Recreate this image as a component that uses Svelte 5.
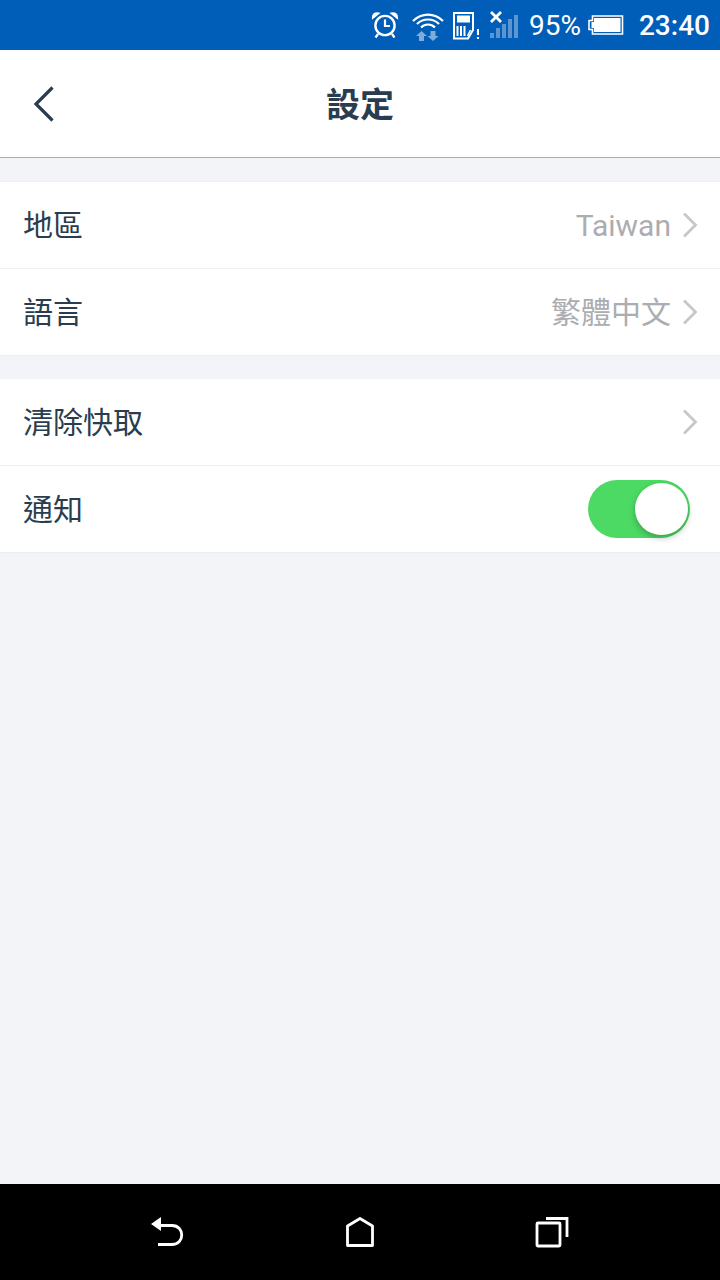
<script lang="ts">
	const groups = [
		[
			{ label: '地區', value: 'Taiwan', arrow: true },
			{ label: '語言', value: '繁體中文', cjk: true, arrow: true }
		],
		[
			{ label: '清除快取', arrow: true },
			{ label: '通知', toggle: true }
		]
	];
</script>

<div class="screen">
	<div class="status-bar">
		<svg class="ic-alarm" width="30" height="30" viewBox="0 0 30 30" fill="none" stroke="#fff">
			<circle cx="15" cy="15.500" r="9.600" stroke-width="2.400" />
			<path d="M15 9.500v6.500h5" stroke-width="2.200" />
			<path d="M2.500 8.500C2 4.500 5 2 9 3.200L2.500 8.500zM27.500 8.500C28 4.500 25 2 21 3.200l6.500 5.300z" fill="#fff" stroke-width="1.400" />
			<path d="M8 24l-2.500 3.500M22 24l2.500 3.500" stroke-width="2.200" />
		</svg>
		<svg class="ic-wifi" width="32" height="30" viewBox="0 0 32 30" fill="none">
			<g stroke="#fff" stroke-width="2.200">
				<path d="M1 10C9.500 1.500 22.500 1.500 31 10" />
				<path d="M5 13C11 7 21 7 27 13" />
				<path d="M9 16.500C13 12.500 19 12.500 23 16.500" />
			</g>
			<path d="M9.500 20l5.500 5h-3v5H7v-5H4z" fill="#7fadda" />
			<path d="M21 30l-5.500-5h3v-5h5v5h3z" fill="#7fadda" />
		</svg>
		<svg class="ic-sim" width="27" height="28" viewBox="0 0 27 28" fill="none">
			<path d="M1 1h19v17l-5 8.500H1z" stroke="#fff" stroke-width="2" />
			<rect x="4" y="3.500" width="13" height="7" fill="#fff" />
			<path d="M4.500 14v10M8 14v10M11.500 14v10" stroke="#fff" stroke-width="2" />
			<path d="M14.500 24l3-6" stroke="#fff" stroke-width="1.500" />
			<path d="M25 17v6M25 25v2" stroke="#fff" stroke-width="2" />
		</svg>
		<svg class="ic-signal" width="28" height="28" viewBox="0 0 28 28" fill="none">
			<path d="M1 1l10 10M11 1L1 11" stroke="#fff" stroke-width="2.800" />
			<g fill="#5c96d2">
				<rect x="0" y="22" width="4" height="5" />
				<rect x="6" y="17" width="4" height="10" />
				<rect x="12" y="13" width="4" height="14" />
				<rect x="18" y="8" width="4" height="19" />
				<rect x="24" y="4" width="4" height="23" />
			</g>
		</svg>
		<span class="pct">95%</span>
		<svg class="ic-battery" width="36" height="20" viewBox="0 0 36 20" fill="none">
			<path d="M4.500 1h30v18h-30v-4.500H1v-9h3.500z" stroke="#fff" stroke-width="1.600" />
			<path d="M6 3h26.500v14H6v-4H3.500V7H6z" fill="#fff" />
		</svg>
		<span class="time">23:40</span>
	</div>

	<header class="top-bar">
		<svg class="back" width="24" height="38" viewBox="0 0 24 38" fill="none">
			<path d="M20.500 2.500L4 19l16.500 16.500" stroke="#2a3d50" stroke-width="3.200" />
		</svg>
		<h1>設定</h1>
	</header>

	<main class="content">
		{#each groups as group}
			<section class="group">
				{#each group as row}
					<div class="row">
						<span class="label">{row.label}</span>
						{#if row.value}
							<span class="value" class:cjk={row.cjk}>{row.value}</span>
						{/if}
						{#if row.arrow}
							<svg class="chevron" width="16" height="26" viewBox="0 0 16 26" fill="none">
								<path d="M2 1.500L13.500 13 2 24.500" stroke="#c8c8c8" stroke-width="2.800" />
							</svg>
						{/if}
						{#if row.toggle}
							<div class="toggle"><div class="knob"></div></div>
						{/if}
					</div>
				{/each}
			</section>
		{/each}
	</main>

	<nav class="nav-bar">
		<svg class="nav-back" width="36" height="32" viewBox="0 0 36 32" fill="none" stroke="#fff" stroke-width="2.800">
			<path d="M9 9.500h13c13 0 13 19 0 19H8" />
			<path d="M1 8L11 1v14z" fill="#fff" stroke="none" />
		</svg>
		<svg class="nav-home" width="30" height="32" viewBox="0 0 30 32" fill="none" stroke="#fff" stroke-width="2.800">
			<path d="M15 2.500L27.500 10v19.500h-25V10z" stroke-linejoin="round" />
		</svg>
		<svg class="nav-recent" width="34" height="32" viewBox="0 0 34 32" fill="none" stroke="#fff" stroke-width="2.800">
			<rect x="2" y="7" width="23" height="23" rx="1" />
			<path d="M11 2.500h21V21" />
		</svg>
	</nav>
</div>

<style>
	:global(body) {
		margin: 0;
		background: #f3f4f8;
	}

	.screen {
		width: 720px;
		height: 1280px;
		display: flex;
		flex-direction: column;
		font-family: 'Noto Sans CJK TC', 'Noto Sans', sans-serif;
		overflow: hidden;
	}

	.status-bar {
		height: 50px;
		background: #005eb8;
		display: flex;
		align-items: center;
		justify-content: flex-end;
		padding-right: 10px;
		color: #fff;
		font-family: Roboto, sans-serif;
		flex-shrink: 0;
	}

	.status-bar svg {
		flex-shrink: 0;
	}

	.ic-alarm {
		margin-right: 12px;
	}

	.ic-wifi {
		margin-right: 9px;
		margin-top: 2px;
	}

	.ic-sim {
		margin-right: 10px;
		margin-top: 2px;
	}

	.ic-signal {
		margin-right: 11px;
		margin-top: -1px;
	}

	.pct {
		font-size: 28px;
		margin-right: 7px;
	}

	.ic-battery {
		margin-right: 15px;
	}

	.time {
		font-size: 28px;
		font-weight: 500;
	}

	.top-bar {
		height: 107px;
		background: #fff;
		border-bottom: 1px solid #aaaaaa;
		display: flex;
		align-items: center;
		justify-content: center;
		position: relative;
		flex-shrink: 0;
	}

	.back {
		position: absolute;
		left: 32px;
		top: 35px;
	}

	h1 {
		margin: 0 0 2px;
		font-size: 34px;
		font-weight: 700;
		color: #2a3d50;
	}

	.content {
		flex: 1;
		background: #f3f4f8;
		padding-top: 23px;
		display: flex;
		flex-direction: column;
		gap: 22px;
	}

	.group {
		background: #fff;
		border-top: 1px solid #f0f1f4;
		border-bottom: 1px solid #ebedf0;
	}

	.group + .group {
		border-top-color: #f3f4f8;
	}

	.row {
		height: 86px;
		display: flex;
		align-items: center;
		padding: 0 22px 0 23px;
	}

	.row + .row {
		border-top: 1px solid #f0f0f2;
	}

	.label {
		flex: 1;
		font-size: 30px;
		color: #2a3d50;
		padding-bottom: 5px;
	}

	.value {
		font-family: Roboto, sans-serif;
		font-size: 30px;
		color: #abadb1;
		margin-right: 11px;
	}

	.value.cjk {
		font-family: 'Noto Sans CJK TC', sans-serif;
		padding-bottom: 4px;
	}

	.toggle {
		width: 102px;
		height: 58px;
		border-radius: 29px;
		background: #4cd964;
		margin-right: 8px;
		position: relative;
	}

	.knob {
		position: absolute;
		top: 3px;
		right: 2px;
		width: 53px;
		height: 52px;
		border-radius: 50%;
		background: #fff;
		box-shadow: 0 3px 6px rgba(0, 0, 0, 0.25);
	}

	.nav-bar {
		height: 96px;
		background: #000;
		display: flex;
		align-items: center;
		flex-shrink: 0;
		padding-left: 150px;
	}

	.nav-home {
		margin-left: 159px;
	}

	.nav-recent {
		margin-left: 160px;
	}
</style>
